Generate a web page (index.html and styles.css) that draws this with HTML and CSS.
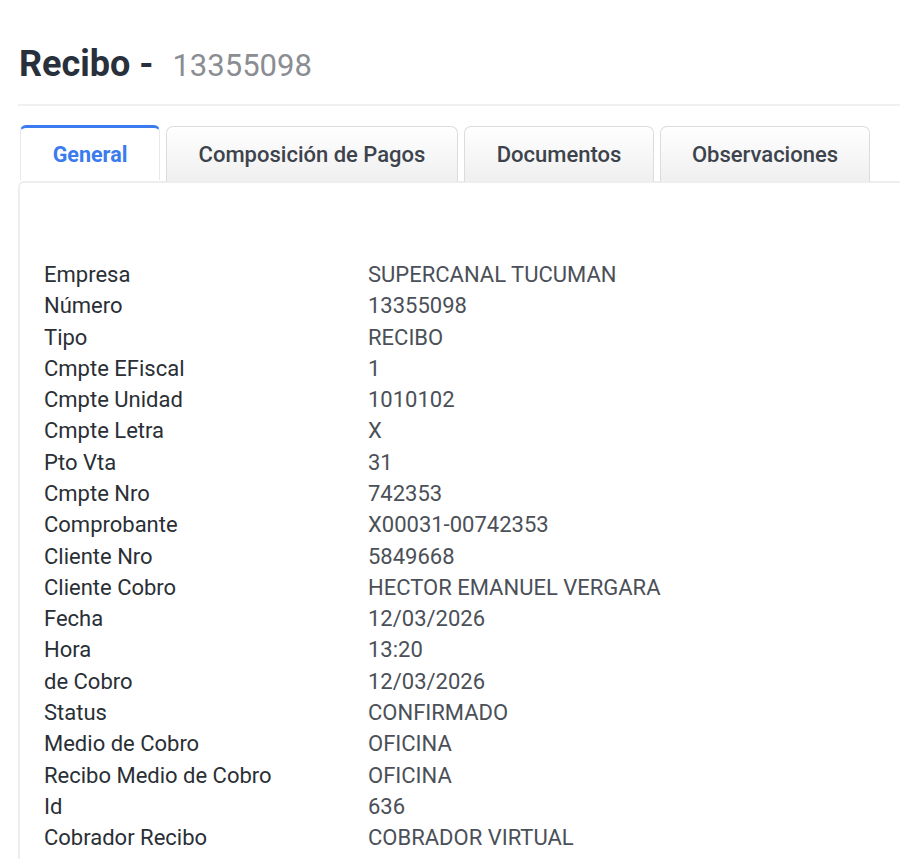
FILE: index.html
```html
<!DOCTYPE html>
<html lang="es">
<head>
  <meta charset="UTF-8" />
  <meta name="viewport" content="width=device-width, initial-scale=1.0"/>
  <title>Recibo - 13355098</title>
  <link rel="stylesheet" href="styles.css">
</head>
<body>
  <div class="page">
    <h1 class="page-title">Recibo - <small>13355098</small></h1>

    <ul class="tabs">
      <li class="tab active">General</li>
      <li class="tab">Composición de Pagos</li>
      <li class="tab">Documentos</li>
      <li class="tab">Observaciones</li>
    </ul>

    <div class="tab-panel">
      <dl class="details">
        <dt>Empresa</dt><dd>SUPERCANAL TUCUMAN</dd>
        <dt>Número</dt><dd>13355098</dd>
        <dt>Tipo</dt><dd>RECIBO</dd>
        <dt>Cmpte EFiscal</dt><dd>1</dd>
        <dt>Cmpte Unidad</dt><dd>1010102</dd>
        <dt>Cmpte Letra</dt><dd>X</dd>
        <dt>Pto Vta</dt><dd>31</dd>
        <dt>Cmpte Nro</dt><dd>742353</dd>
        <dt>Comprobante</dt><dd>X00031-00742353</dd>
        <dt>Cliente Nro</dt><dd>5849668</dd>
        <dt>Cliente Cobro</dt><dd>HECTOR EMANUEL VERGARA</dd>
        <dt>Fecha</dt><dd>12/03/2026</dd>
        <dt>Hora</dt><dd>13:20</dd>
        <dt>de Cobro</dt><dd>12/03/2026</dd>
        <dt>Status</dt><dd>CONFIRMADO</dd>
        <dt>Medio de Cobro</dt><dd>OFICINA</dd>
        <dt>Recibo Medio de Cobro</dt><dd>OFICINA</dd>
        <dt>Id</dt><dd>636</dd>
        <dt>Cobrador Recibo</dt><dd>COBRADOR VIRTUAL</dd>
      </dl>
    </div>
  </div>
</body>
</html>
```

FILE: styles.css
```css
:root {
  --text-dark: #2b2f36;
  --text-muted: #8a8d92;
  --border: #dcdcdc;
  --primary: #3a7bf0;
}

* {
  box-sizing: border-box;
  margin: 0;
  padding: 0;
  font-family: Roboto, 'Liberation Sans', sans-serif;
}

body {
  background: #fff;
  color: var(--text-dark);
  overflow: hidden;
}

.page {
  padding: 36px 0 0 18px;
}

.page-title {
  font-size: 36px;
  font-weight: 700;
  line-height: 56px;
  color: #27303b;
  padding-left: 1px;
  padding-bottom: 10px;
  border-bottom: 2px solid #f0f0f0;
}

.page-title small {
  font-size: 31px;
  font-weight: 400;
  color: var(--text-muted);
  margin-left: 10px;
}

.tabs {
  list-style: none;
  display: flex;
  gap: 6px;
  margin-top: 20px;
  padding-left: 2px;
}

.tab {
  height: 56px;
  display: flex;
  align-items: center;
  justify-content: center;
  font-size: 22px;
  font-weight: 500;
  color: #3d434c;
  border: 1px solid var(--border);
  border-bottom: none;
  border-radius: 7px 7px 0 0;
  background: linear-gradient(to bottom, #ffffff, #efefef);
  position: relative;
  z-index: 1;
}

.tab:nth-child(2) { width: 292px; }
.tab:nth-child(3) { width: 190px; }
.tab:nth-child(4) { width: 210px; }

.tab.active {
  width: 140px;
  height: 55px;
  margin-top: -1px;
  font-size: 21.5px;
  font-weight: 700;
  color: var(--primary);
  background: #fff;
  border-color: #e8e8e8;
  border-top: 3px solid var(--primary);
  border-radius: 6px 6px 0 0;
}

.tab-panel {
  margin-top: -1px;
  border-top: 2px solid #eeeeee;
  border-left: 2px solid #eeeeee;
  border-radius: 6px 0 0 0;
  padding: 76px 0 10px 24px;
}

.details {
  display: grid;
  grid-template-columns: 324px 1fr;
  font-size: 22px;
  line-height: 31.28px;
}

.details dt {
  color: #2a2f36;
  font-weight: 400;
}

.details dd {
  color: #4b5058;
}
```
